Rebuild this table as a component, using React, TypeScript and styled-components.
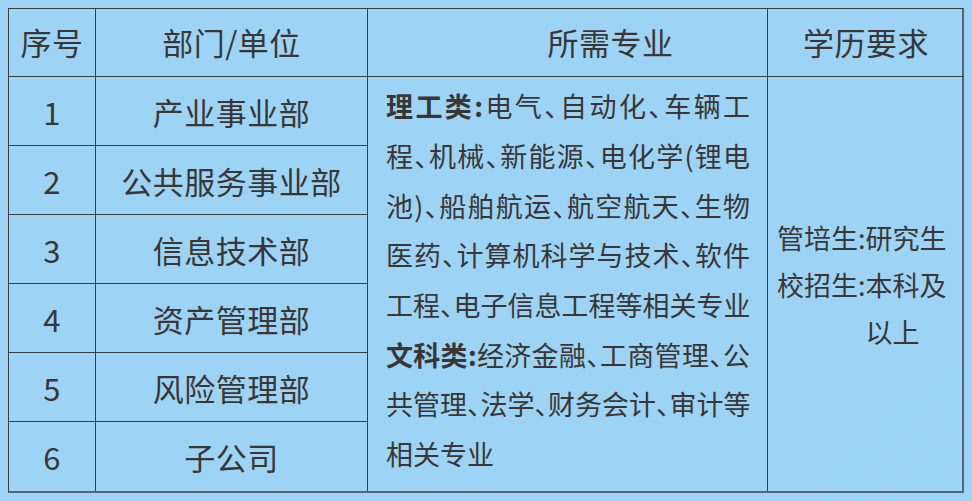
import React from "react";
import styled, { createGlobalStyle } from "styled-components";

const COLORS = {
  bg: "#9dd4f5",
  text: "#3a3636",
  line: "#3b3b3d",
  edge: "#56656f",
  deco: "#8ddcf9",
};

const GlobalStyle = createGlobalStyle`
  html, body {
    margin: 0;
    background: ${COLORS.bg};
  }
  body {
    font-family: "Noto Sans CJK SC", "Noto Sans", sans-serif;
    color: ${COLORS.text};
  }
`;

const Page = styled.div`
  position: relative;
  width: 972px;
  height: 501px;
  padding: 8px;
  box-sizing: border-box;
  overflow: hidden;
`;

const Deco = styled.svg`
  position: absolute;
  left: 780px;
  top: 360px;
  width: 192px;
  height: 141px;
  opacity: 0.8;
  pointer-events: none;
`;

const Table = styled.div`
  position: relative;
  display: grid;
  grid-template-columns: 87px 272px 400px 196px;
  grid-template-rows: 68px repeat(6, minmax(0, 1fr));
  height: 485px;
  box-sizing: border-box;
  border-top: 1.5px solid ${COLORS.line};
  border-left: 1.5px solid ${COLORS.line};
  border-right: 2px solid ${COLORS.edge};
  border-bottom: 2px solid ${COLORS.edge};
`;

const Cell = styled.div<{ $noRight?: boolean; $noBottom?: boolean }>`
  display: flex;
  align-items: center;
  justify-content: center;
  font-size: 31px;
  letter-spacing: 0.5px;
  border-right: ${(p) => (p.$noRight ? "none" : `1.5px solid ${COLORS.line}`)};
  border-bottom: ${(p) => (p.$noBottom ? "none" : `1.5px solid ${COLORS.line}`)};
`;

const HeaderCell = styled(Cell)<{ $shift?: number }>`
  padding-left: ${(p) => (p.$shift ? `${p.$shift}px` : "0")};
  padding-bottom: 3px;
`;

const MajorCell = styled.div`
  grid-column: 3;
  grid-row: 2 / span 6;
  min-height: 0;
  display: flex;
  flex-direction: column;
  justify-content: center;
  padding: 0 17px 8px 18px;
  font-size: 27px;
  line-height: 49.7px;
  border-right: 1.5px solid ${COLORS.line};
`;

const MajorLine = styled.div<{ $justify?: boolean }>`
  white-space: nowrap;
  text-align: ${(p) => (p.$justify ? "justify" : "left")};
  text-align-last: ${(p) => (p.$justify ? "justify" : "left")};
`;

const Punct = styled.span`
  letter-spacing: -0.5em;
`;

const Label = styled.span`
  font-weight: 700;
`;

const DegreeCell = styled.div`
  grid-column: 4;
  grid-row: 2 / span 6;
  min-height: 0;
  display: flex;
  align-items: center;
  padding-left: 9px;
`;

const DegreeList = styled.div`
  display: grid;
  grid-template-columns: auto 83px;
  font-size: 27px;
  line-height: 47px;
`;

const rows = [
  "产业事业部",
  "公共服务事业部",
  "信息技术部",
  "资产管理部",
  "风险管理部",
  "子公司",
];

const majorLines: { label?: string; text: string; justify: boolean }[] = [
  { label: "理工类:", text: "电气、自动化、车辆工", justify: true },
  { text: "程、机械、新能源、电化学(锂电", justify: true },
  { text: "池)、船舶航运、航空航天、生物", justify: true },
  { text: "医药、计算机科学与技术、软件", justify: true },
  { text: "工程、电子信息工程等相关专业", justify: true },
  { label: "文科类:", text: "经济金融、工商管理、公", justify: true },
  { text: "共管理、法学、财务会计、审计等", justify: true },
  { text: "相关专业", justify: false },
];

function withPunct(text: string) {
  return text.split("、").flatMap((part, i) =>
    i === 0 ? [part] : [<Punct key={i}>、</Punct>, part]
  );
}

export default function App() {
  return (
    <Page>
      <GlobalStyle />
      <Deco viewBox="780 360 192 141" fill="none">
        <path d="M826 503 Q875 425 975 368" stroke={COLORS.deco} strokeWidth="2" />
        <path d="M856 503 Q905 445 975 402" stroke={COLORS.deco} strokeWidth="2" />
        <path d="M889 503 Q930 465 975 437" stroke={COLORS.deco} strokeWidth="2" />
        <path d="M932 503 Q952 485 975 470" stroke={COLORS.deco} strokeWidth="2" />
      </Deco>
      <Table>
        <HeaderCell>序号</HeaderCell>
        <HeaderCell>部门/单位</HeaderCell>
        <HeaderCell $shift={86}>所需专业</HeaderCell>
        <HeaderCell $noRight>学历要求</HeaderCell>

        {rows.map((name, i) => (
          <React.Fragment key={name}>
            <Cell style={{ gridColumn: 1, gridRow: i + 2 }} $noBottom={i === rows.length - 1}>
              {i + 1}
            </Cell>
            <Cell style={{ gridColumn: 2, gridRow: i + 2 }} $noBottom={i === rows.length - 1}>
              {name}
            </Cell>
          </React.Fragment>
        ))}

        <MajorCell>
          {majorLines.map((l, i) => (
            <MajorLine key={i} $justify={l.justify}>
              {l.label && <Label>{l.label}</Label>}
              {withPunct(l.text)}
            </MajorLine>
          ))}
        </MajorCell>

        <DegreeCell>
          <DegreeList>
            <span>管培生:</span>
            <span>研究生</span>
            <span>校招生:</span>
            <span>本科及以上</span>
          </DegreeList>
        </DegreeCell>
      </Table>
    </Page>
  );
}
